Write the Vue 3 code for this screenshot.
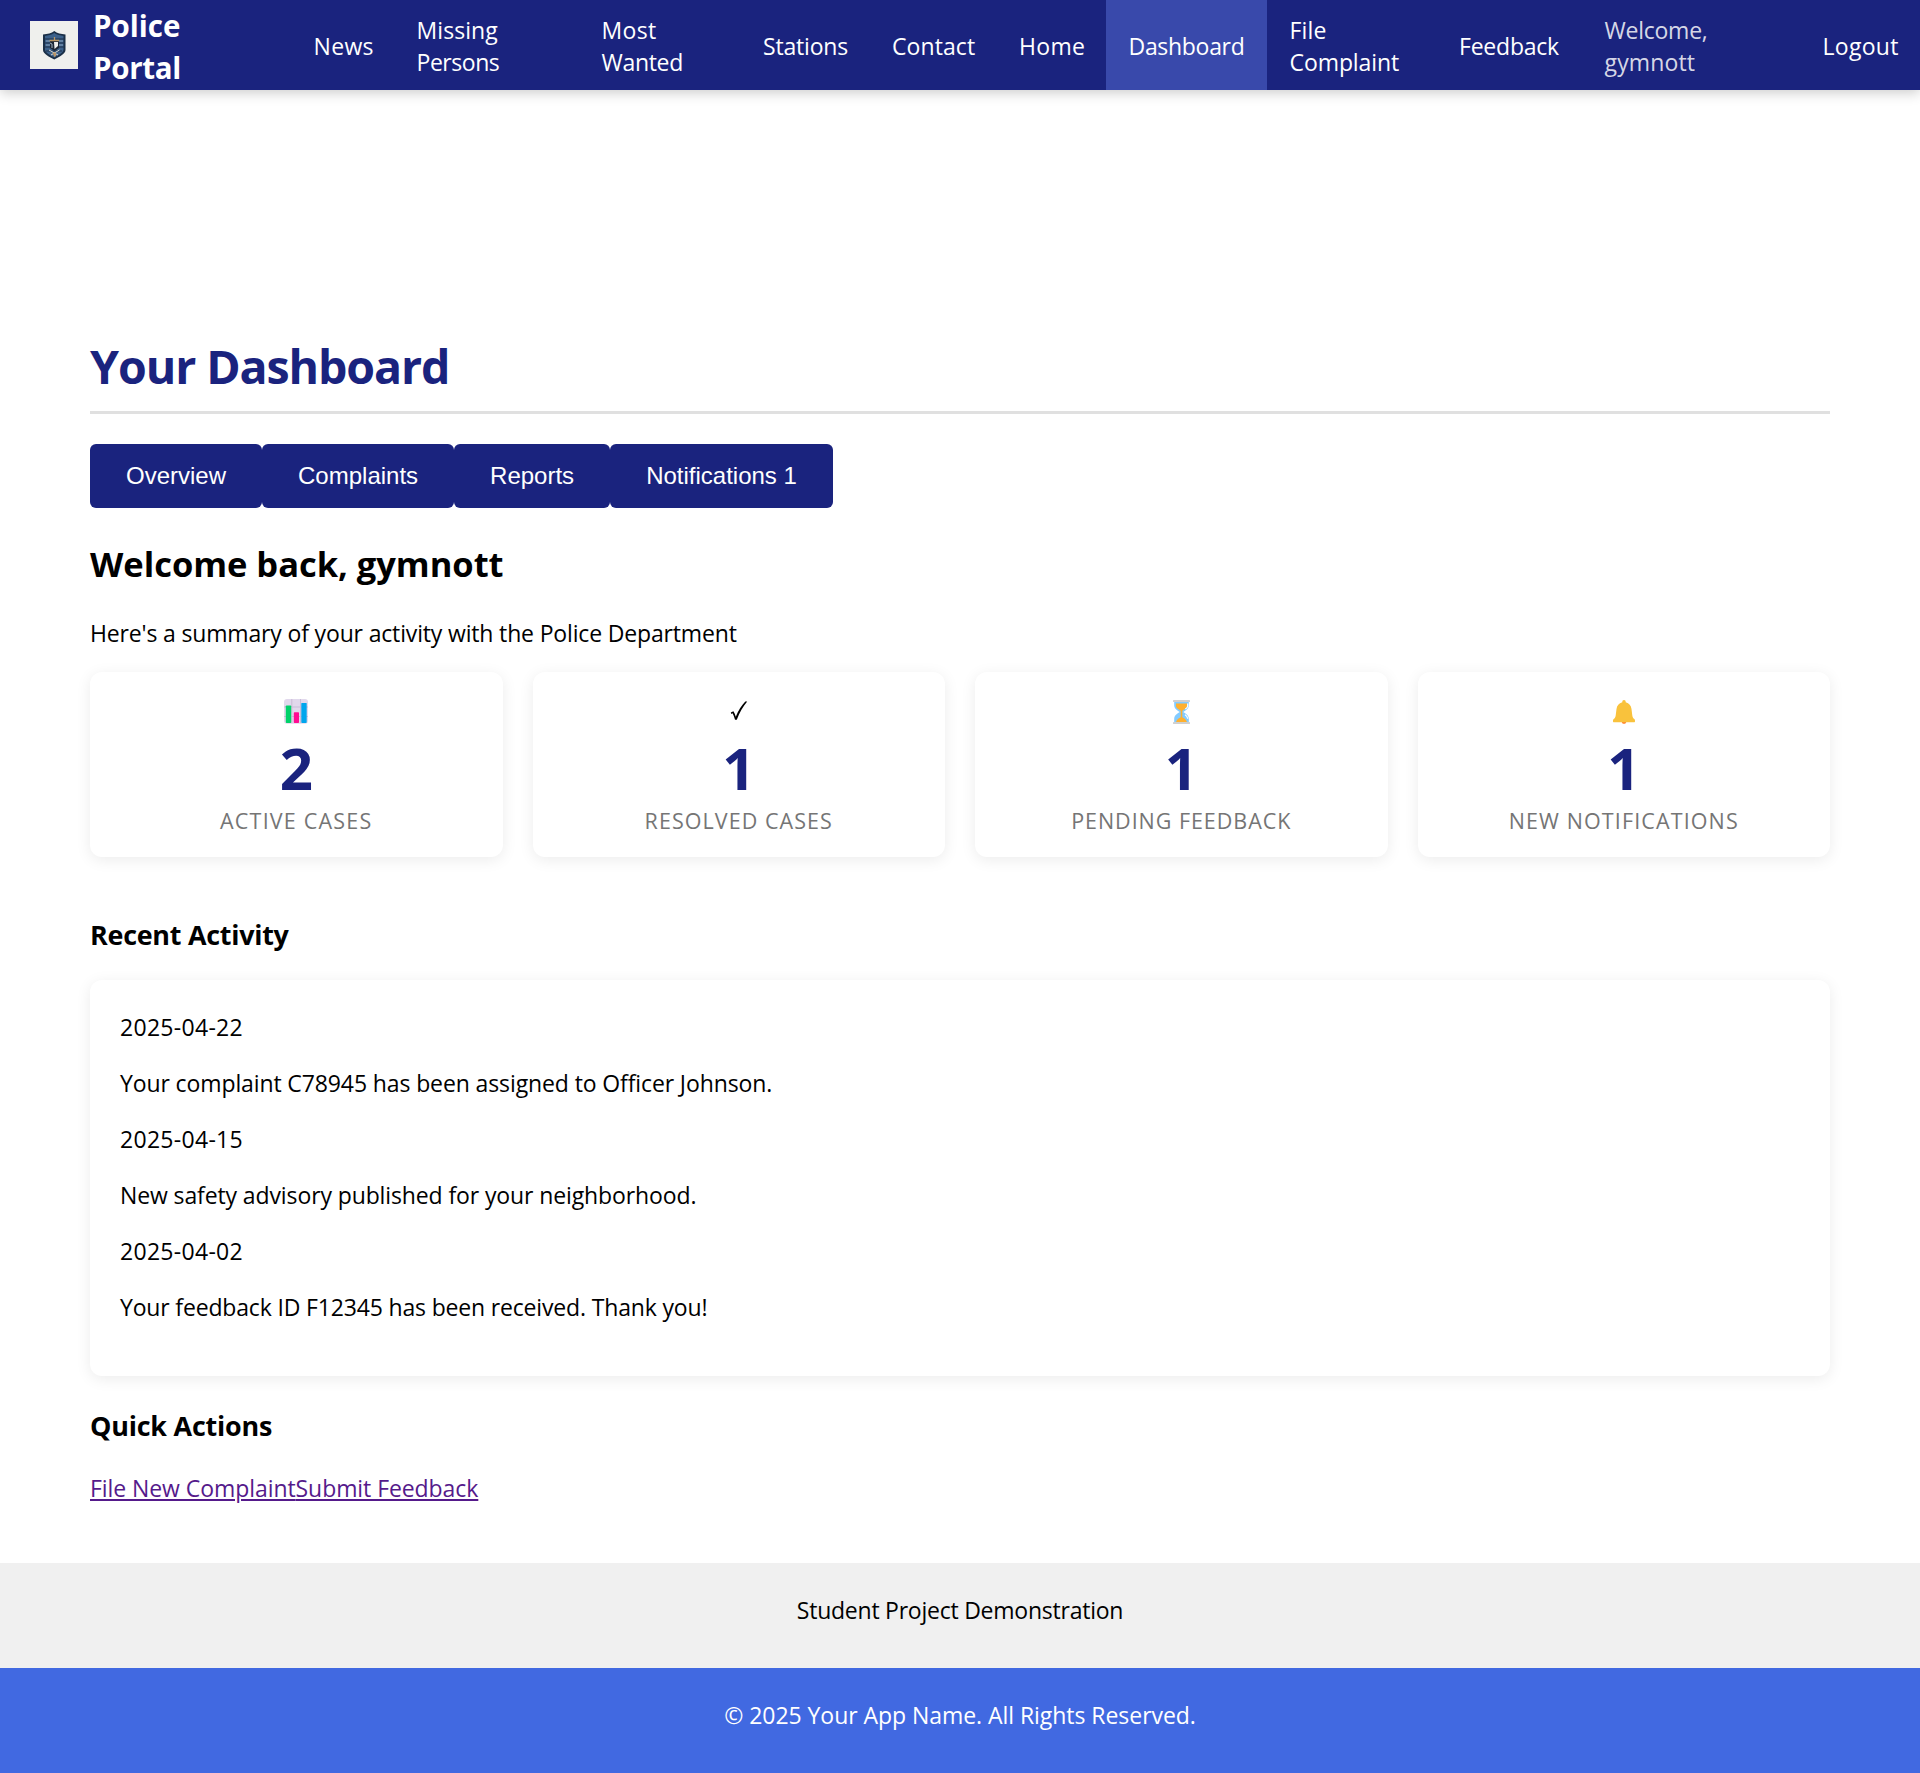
<script setup>
// Column widths and tracking for each navigation entry
const nav = [
  { lines: [{ t: 'News', ls: 0.33 }], width: 103 },
  { lines: [{ t: 'Missing', ls: 0.08 }, { t: 'Persons', ls: -0.46 }], width: 185 },
  { lines: [{ t: 'Most', ls: 0.35 }, { t: 'Wanted', ls: -0.32 }], width: 161.5 },
  { lines: [{ t: 'Stations', ls: -0.19 }], width: 129 },
  { lines: [{ t: 'Contact', ls: 0.08 }], width: 127 },
  { lines: [{ t: 'Home', ls: 0.3 }], width: 109.5 },
  { lines: [{ t: 'Dashboard', ls: -0.3 }], width: 161, active: true },
  { lines: [{ t: 'File', ls: 0.2 }, { t: 'Complaint', ls: -0.08 }], width: 169.5 },
  { lines: [{ t: 'Feedback', ls: -0.22 }], width: 145.5 },
  { lines: [{ t: 'Welcome,', ls: -0.24 }, { t: 'gymnott', ls: 0.15 }], width: 218, muted: true },
  { lines: [{ t: 'Logout', ls: 0.3 }], width: 120 }
]

const tabs = ['Overview', 'Complaints', 'Reports', 'Notifications 1']

const stats = [
  { icon: 'chart', value: 2, label: 'Active Cases', ls: 1.2 },
  { icon: 'check', value: 1, label: 'Resolved Cases', ls: 1.06 },
  { icon: 'hourglass', value: 1, label: 'Pending Feedback', ls: 0.96 },
  { icon: 'bell', value: 1, label: 'New Notifications', ls: 1.12 }
]

const activity = [
  { date: '2025-04-22', text: 'Your complaint C78945 has been assigned to Officer Johnson.', ls: -0.113 },
  { date: '2025-04-15', text: 'New safety advisory published for your neighborhood.', ls: -0.114 },
  { date: '2025-04-02', text: 'Your feedback ID F12345 has been received. Thank you!', ls: -0.165 }
]
</script>

<template>
  <div class="page">
    <header class="navbar">
      <div class="brand">
        <svg class="logo" viewBox="0 0 48 48">
          <rect width="48" height="48" fill="#eff0ed" />
          <path d="M24.300 10C27 12.500 31 13 35.500 13.500V29C35.500 33 29 36 24.300 38.500C19.500 36 13 33 13 29V13.500C17.500 13 21.500 12.500 24.300 10Z" fill="#1b3047" />
          <path d="M24.300 12C27 14 30.500 14.500 33.500 15V28.500C33.500 31.500 28.500 34.200 24.300 36.500C20 34.200 15 31.500 15 28.500V15C18 14.500 21.500 14 24.300 12Z" fill="#3c618a" />
          <path d="M15 18H34M15 22H34M15 26H34M16 30H32" stroke="#1d3048" stroke-width="1.200" />
          <path d="M16 20H20M28.500 20H33M16 24H20M29 24H33" stroke="#87a3bb" stroke-width="1.200" />
          <path d="M20 19H29V27L24.500 30L20 27Z" fill="#1b2635" />
          <path d="M24 21H28V25L24.500 28Z" fill="#eef0ee" />
          <path d="M20 22L22 23V27" stroke="#9fb1c0" stroke-width="1" fill="none" />
          <path d="M19.500 19.500H29M24.500 16V20" stroke="#b89663" stroke-width="1.300" />
          <path d="M19 29L28 34M29.500 29L21 34" stroke="#d5d8d3" stroke-width="1" />
          <path d="M22.500 31.500H26V35L24.300 36Z" fill="#b89669" />
        </svg>
        <div class="brand-name">
          <span class="police">Police</span>
          <span class="portal">Portal</span>
        </div>
      </div>
      <nav class="links">
        <a
          v-for="item in nav"
          :key="item.lines[0].t"
          class="nav-item"
          :class="{ active: item.active, muted: item.muted }"
          :style="{ width: item.width + 'px' }"
        >
          <span v-for="l in item.lines" :key="l.t" :style="{ letterSpacing: l.ls + 'px' }">{{ l.t }}</span>
        </a>
      </nav>
    </header>

    <main class="dashboard">
      <h1>Your Dashboard</h1>
      <div class="tabs">
        <button v-for="tab in tabs" :key="tab" type="button">{{ tab }}</button>
      </div>

      <h2>Welcome back, gymnott</h2>
      <p class="summary">Here's a summary of your activity with the Police Department</p>

      <section class="stats">
        <article v-for="s in stats" :key="s.label" class="card stat">
          <div class="stat-icon">
            <svg v-if="s.icon === 'chart'" width="24" height="25" viewBox="0 0 24 25">
              <rect width="24" height="24.700" rx="3" fill="#e1d8ec" />
              <path d="M7.800 0V24M16.500 0V24M0 8H24M0 17.500H24" stroke="#c9bdd8" stroke-width="1" />
              <rect x="1.800" y="6.500" width="5.400" height="17.500" rx="0.700" fill="#00d26a" />
              <rect x="9.800" y="13.300" width="5.200" height="10.700" rx="0.700" fill="#ff0c92" />
              <rect x="17.300" y="3.900" width="5.400" height="20.100" rx="0.700" fill="#00a6ed" />
            </svg>
            <svg v-else-if="s.icon === 'check'" width="24" height="25" viewBox="0 0 24 25">
              <path d="M3.800 13.600L6.400 12.200C7.400 13.700 8.200 15.500 8.800 17.700C11.300 11.700 14.500 6.300 18.300 2.500H20.200C16 7.400 12.500 13.500 9.800 20.800H8C7.200 17.900 6.400 15.800 5.500 14.300L4.300 14.900Z" fill="#000" />
            </svg>
            <svg v-else-if="s.icon === 'hourglass'" width="17" height="24" viewBox="0 0 17 24">
              <path d="M1.200 1.500H15.800V5C15.800 8.500 13.500 10 10.300 12C13.500 14 15.800 15.500 15.800 19V22.500H1.200V19C1.200 15.500 3.500 14 6.700 12C3.500 10 1.200 8.500 1.200 5Z" fill="#83cbff" />
              <path d="M3 3.500H14V6.500C13.200 8.700 11 9.500 9.300 10.700V17.300C11.500 18 13 19.500 14 22H3C4 19.500 5.500 18 7.700 17.300V10.700C6 9.500 3.800 8.700 3 6.500Z" fill="#ffb02e" />
              <path d="M14.700 3.500V6C14.500 7.300 13.500 8.300 12.300 9M12 14.800C13.500 15.800 14.500 17 14.700 18.700" fill="none" stroke="#fff" stroke-width="1.200" />
              <rect width="17" height="2" rx="0.500" fill="#d0d0d0" />
              <rect y="22" width="17" height="2" rx="0.500" fill="#d0d0d0" />
            </svg>
            <svg v-else width="22" height="24" viewBox="0 0 22 24">
              <path d="M8.500 21H13.500C13.200 23 12.400 23.800 11 23.800C9.600 23.800 8.800 23 8.500 21Z" fill="#ff822d" />
              <path d="M11 0C12.100 0 12.800 0.800 12.700 2.200C16.200 3 18 5.500 18.500 9L19.300 15.500C19.600 17.500 20.300 18.200 21.300 19C22 19.600 22 20.300 22 21.200C22 22 21.700 22.300 21.200 22.300H0.800C0.300 22.300 0 22 0 21.200C0 20.300 0 19.600 0.700 19C1.700 18.200 2.400 17.500 2.700 15.500L3.500 9C4 5.500 5.800 3 9.300 2.200C9.200 0.800 9.900 0 11 0Z" fill="#f9c23c" />
            </svg>
          </div>
          <div class="stat-value">{{ s.value }}</div>
          <div class="stat-label" :style="{ letterSpacing: s.ls + 'px' }">{{ s.label }}</div>
        </article>
      </section>

      <h3 class="recent">Recent Activity</h3>
      <section class="card activity">
        <template v-for="a in activity" :key="a.date">
          <p class="date">{{ a.date }}</p>
          <p :style="{ letterSpacing: a.ls + 'px' }">{{ a.text }}</p>
        </template>
      </section>

      <h3 class="quick">Quick Actions</h3>
      <div class="actions"><a href="#">File New Complaint</a><a href="#">Submit Feedback</a></div>
    </main>

    <div class="notice"><p>Student Project Demonstration</p></div>
    <footer class="footer"><p>© 2025 Your App Name. All Rights Reserved.</p></footer>
  </div>
</template>

<style>
body {
  margin: 0;
  background: #fff;
}
</style>

<style scoped>
.page {
  font-family: "Open Sans", "Noto Sans", sans-serif;
  font-size: 23px;
  line-height: 30px;
  color: #000;
}
h1, h2, h3, p {
  margin: 0;
}
p {
  padding-top: 2px;
}
.navbar {
  display: flex;
  height: 90px;
  background: #1a237e;
  color: #fff;
  box-shadow: 0 3px 12px rgba(0, 0, 0, 0.2);
}
.brand {
  display: flex;
  align-items: center;
  gap: 15px;
  width: 261px;
  padding-left: 30px;
}
.logo {
  width: 48px;
  height: 48px;
}
.brand-name {
  display: flex;
  flex-direction: column;
  padding-top: 3px;
  font-size: 29.500px;
  font-weight: 700;
  line-height: 42px;
}
.police {
  letter-spacing: 0;
}
.portal {
  letter-spacing: -0.300px;
}
.links {
  display: flex;
}
.nav-item {
  display: flex;
  flex-direction: column;
  justify-content: center;
  box-sizing: border-box;
  flex: none;
  padding: 2px 0 0 22.500px;
  line-height: 32px;
  white-space: nowrap;
}
.nav-item.active {
  background: #3949ab;
}
.nav-item.muted {
  color: rgba(255, 255, 255, 0.84);
}
.dashboard {
  padding: 244px 90px 60px;
}
h1 {
  padding-bottom: 13px;
  border-bottom: 3px solid #e0e0e0;
  color: #1a237e;
  font-size: 46.500px;
  line-height: 64px;
  letter-spacing: -1.080px;
}
.tabs {
  display: flex;
  margin-top: 30px;
}
.tabs button {
  height: 64px;
  padding: 0 36px;
  border: 0;
  border-radius: 6px;
  background: #1a237e;
  color: #fff;
  font: 24px "Liberation Sans", Arial, sans-serif;
}
h2 {
  margin-top: 32px;
  font-size: 34.500px;
  line-height: 48px;
  letter-spacing: -0.030px;
}
.summary {
  margin-top: 28px;
  letter-spacing: -0.160px;
}
.card {
  box-sizing: border-box;
  border-radius: 12px;
  background: #fff;
  box-shadow: 0 3px 15px rgba(0, 0, 0, 0.08);
}
.stats {
  display: grid;
  grid-template-columns: repeat(4, 1fr);
  gap: 30px;
  margin-top: 24px;
}
.stat {
  height: 185px;
  padding-top: 24px;
  text-align: center;
}
.stat-icon {
  display: flex;
  align-items: center;
  justify-content: center;
  box-sizing: border-box;
  height: 32px;
  padding-bottom: 1px;
}
.stat-value {
  margin-top: 12px;
  color: #1a237e;
  font-size: 58px;
  font-weight: 700;
  line-height: 56px;
}
.stat-label {
  margin-top: 10px;
  color: #757575;
  font-size: 21.500px;
  text-transform: uppercase;
}
h3 {
  font-size: 26.900px;
  line-height: 38px;
}
.recent {
  margin-top: 59px;
  letter-spacing: -0.250px;
}
.activity {
  display: flex;
  flex-direction: column;
  gap: 24px;
  height: 396px;
  margin-top: 26px;
  padding: 30px;
}
.date {
  letter-spacing: 0.300px;
}
.quick {
  margin-top: 31px;
  letter-spacing: -0.196px;
}
.actions {
  margin-top: 26px;
  padding-top: 2px;
  letter-spacing: -0.069px;
}
.actions a {
  color: #551a8b;
  text-decoration-thickness: 2px;
  text-underline-offset: 2px;
}
.notice,
.footer {
  box-sizing: border-box;
  height: 105px;
  padding-top: 30px;
  text-align: center;
}
.notice {
  background: #f0f0f0;
  letter-spacing: -0.240px;
}
.footer {
  background: #4169e1;
  color: #fff;
  letter-spacing: -0.046px;
}
</style>
